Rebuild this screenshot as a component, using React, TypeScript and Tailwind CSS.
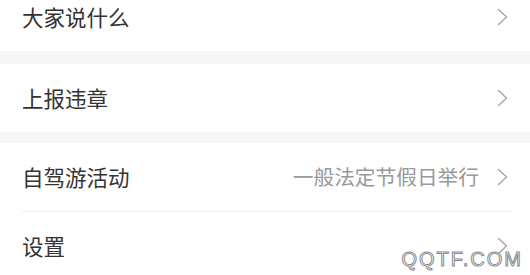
type Item = { label: string; value?: string };

function Chevron() {
    return (
        <svg width="11" height="18" viewBox="0 0 11 18" fill="none" className="text-[#a8a8a8]">
            <polyline points="1.5,1.5 9.5,9 1.5,16.5" stroke="currentColor" strokeWidth="1.5" strokeLinecap="round" strokeLinejoin="round" />
        </svg>
    );
}

function Row({ label, value }: Item) {
    return (
        <div className="flex h-[68px] items-center justify-between pl-[22px] pr-[22px]">
            <span className="text-[21.5px] text-[#333333]">{label}</span>
            <div className="flex items-center gap-[18px]">
                {value && <span className="text-[20.7px] text-[#999999]">{value}</span>}
                <Chevron />
            </div>
        </div>
    );
}

export default function App() {
    return (
        <div
            className="relative h-[275px] w-[530px] overflow-hidden bg-[#f6f6f6]"
            style={{ fontFamily: '"Noto Sans CJK SC", "Noto Sans", sans-serif' }}
        >
            <div className="-mt-[17px] bg-white">
                <Row label="大家说什么" />
            </div>
            <div className="mt-[13px] bg-white">
                <Row label="上报违章" />
            </div>
            <div className="mt-[11px] bg-white">
                <Row label="自驾游活动" value="一般法定节假日举行" />
                <div className="ml-[22px] mr-[18px] h-px bg-[#eeeeee]" />
                <Row label="设置" />
            </div>
            {/* watermark */}
            <span
                className="absolute bottom-[1px] right-[7px] text-[20px] tracking-[2px] text-white"
                style={{ fontFamily: '"Liberation Sans", sans-serif', WebkitTextStroke: "1px #8a8a8a" }}
            >
                QQTF.COM
            </span>
        </div>
    );
}
